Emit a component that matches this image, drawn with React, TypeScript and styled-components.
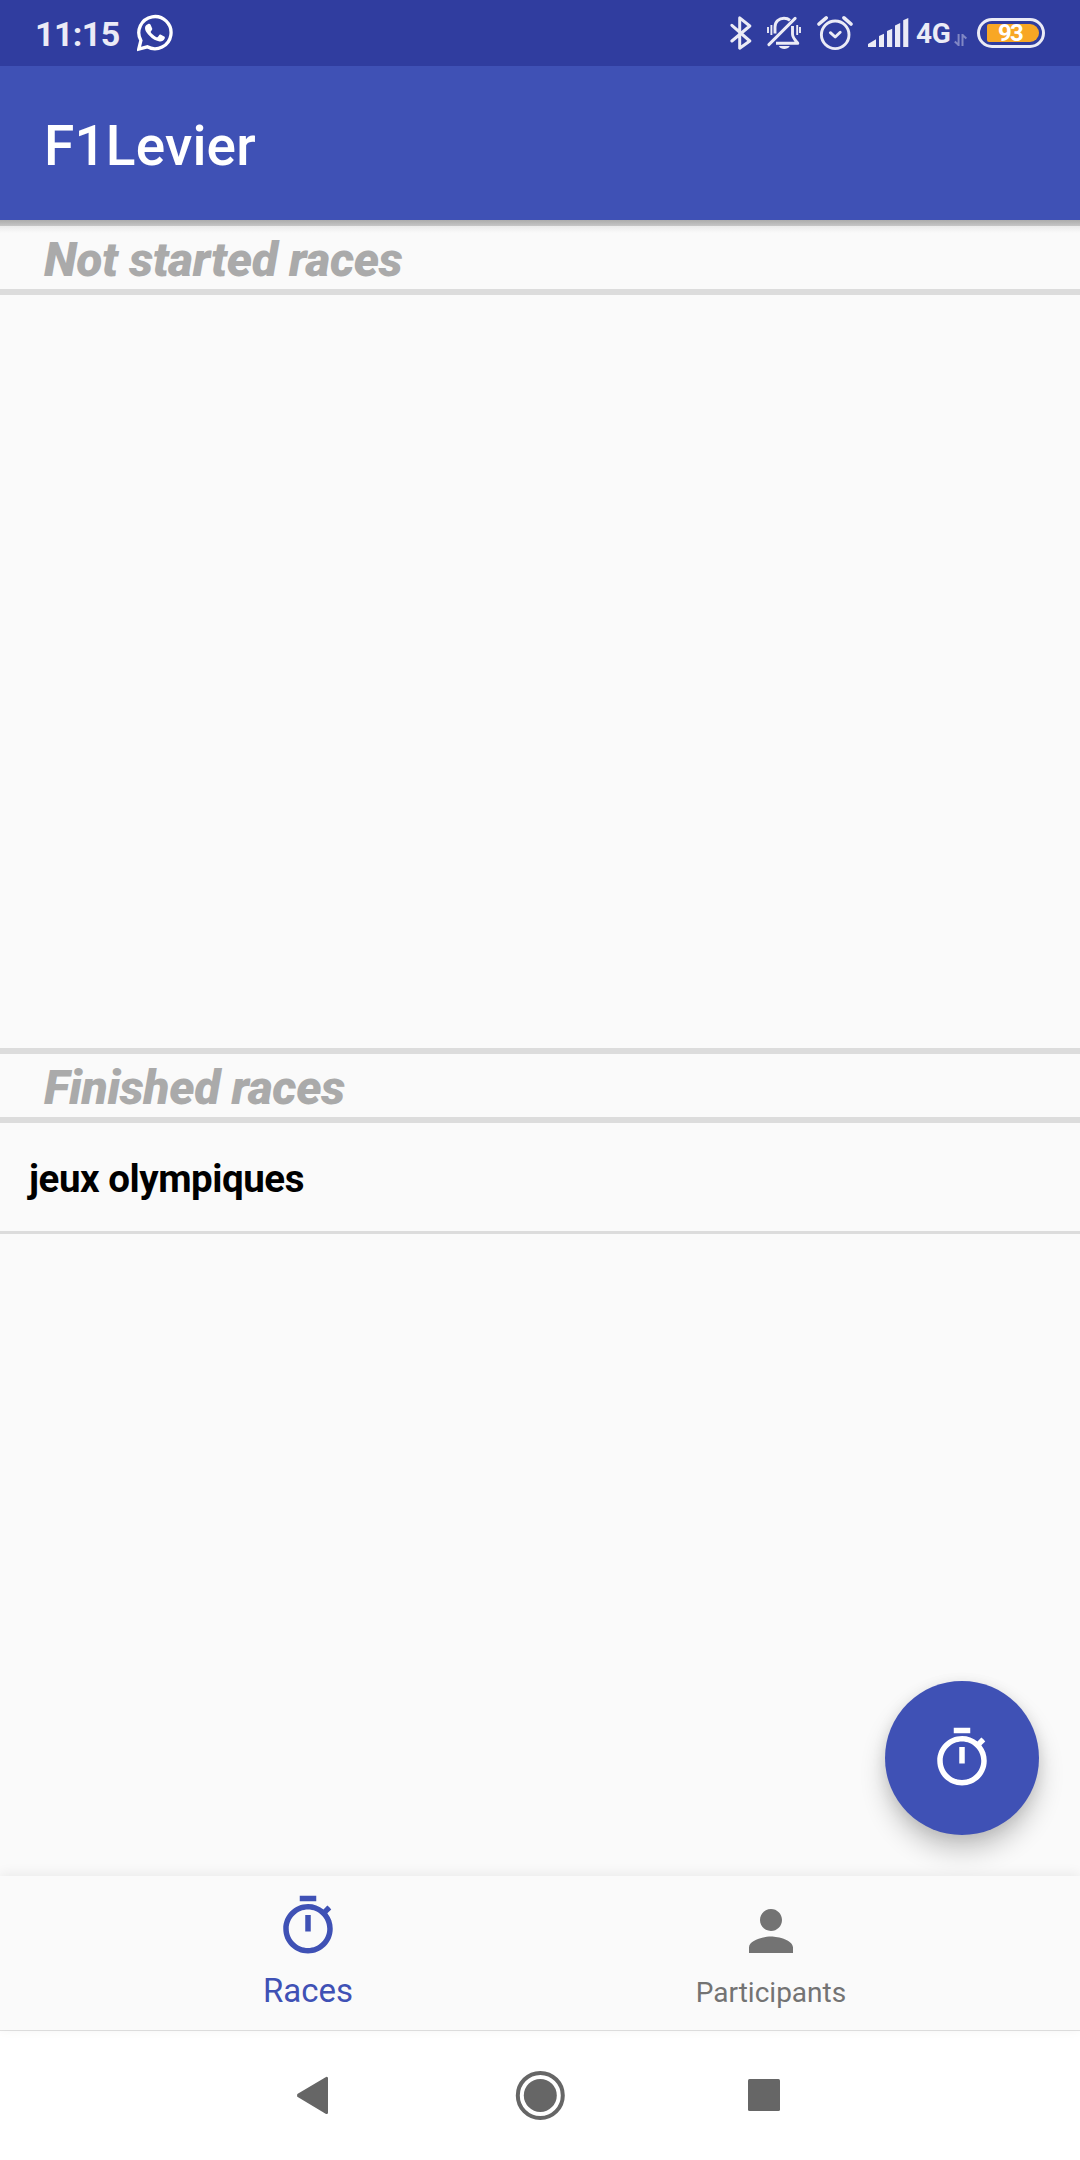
import React from "react";
import styled, { createGlobalStyle } from "styled-components";

const GlobalStyle = createGlobalStyle`
  * { box-sizing: border-box; }
  html, body { margin: 0; padding: 0; }
  body { background: #fafafa; font-family: Roboto, "Noto Sans", sans-serif; }
  svg { display: block; flex: none; }
`;

const Screen = styled.div`
  width: 1080px;
  height: 2160px;
  display: flex;
  flex-direction: column;
  overflow: hidden;
  background: #fafafa;
`;

const StatusBar = styled.header`
  height: 66px;
  flex: none;
  display: flex;
  justify-content: space-between;
  padding: 0 35px 0 35px;
  background: #303d9f;
  color: #ebebf6;
`;

const StatusGroup = styled.div`
  display: flex;
  align-items: center;
`;

const Clock = styled.span`
  width: 102px;
  font-size: 34px;
  font-weight: 700;
  letter-spacing: -0.6px;
  line-height: 40px;
  padding-top: 1px;
`;

const IconSlot = styled.span<{ $gap: number }>`
  display: flex;
  flex: none;
  margin-right: ${(p) => p.$gap}px;
`;

const Network = styled.span`
  width: 38px;
  font-size: 28px;
  font-weight: 700;
  letter-spacing: -0.2px;
  line-height: 32px;
  padding-top: 2px;
`;

const Battery = styled.div`
  width: 68px;
  height: 30px;
  border: 3px solid #ebebf6;
  border-radius: 15px;
  padding: 3px 3px 3px 7px;
`;

const BatteryFill = styled.div`
  width: 52px;
  height: 18px;
  border-radius: 2px 9px 9px 2px;
  background: #f8a724;
  color: #fff;
  font-size: 24px;
  font-weight: 700;
  line-height: 19px;
  text-align: center;
  letter-spacing: -1.8px;
  padding-right: 6px;
`;

const AppBar = styled.div`
  height: 154px;
  flex: none;
  display: flex;
  align-items: center;
  padding: 6px 44px 0;
  background: #3f51b5;
`;

const AppTitle = styled.h1`
  margin: 0;
  color: #fff;
  font-size: 55px;
  font-weight: 500;
  letter-spacing: 0.15px;
  line-height: 64px;
`;

const SectionHeader = styled.h2<{ $raised?: boolean }>`
  flex: none;
  height: 75px;
  margin: 0;
  padding: 2px 0 0 44px;
  border-top: 6px solid ${(p) => (p.$raised ? "transparent" : "#dcdcdc")};
  border-bottom: 6px solid #dcdcdc;
  background: ${(p) =>
    p.$raised
      ? "linear-gradient(to bottom, #acacac 0, #c6c6c6 6px, #ebebeb 6px, #fafafa 13px) border-box"
      : "#fafafa"};
  color: #aaa;
  font-size: 48px;
  font-style: italic;
  font-weight: 900;
  letter-spacing: -0.38px;
  line-height: 63px;
  white-space: nowrap;
`;

const RaceList = styled.ul`
  flex: none;
  height: 753px;
  margin: 0;
  padding: 0;
  list-style: none;
`;

const RaceRow = styled.li`
  height: 111px;
  padding-left: 29px;
  border-bottom: 3px solid #dcdcdc;
  color: #000;
  font-size: 38.5px;
  font-weight: 700;
  letter-spacing: -0.46px;
  line-height: 111px;
`;

const FloatingButton = styled.button`
  position: absolute;
  left: 885px;
  top: 1681px;
  width: 154px;
  height: 154px;
  display: grid;
  place-items: center;
  padding: 0;
  border: 0;
  border-radius: 50%;
  background: #3f51b5;
  color: #fff;
  box-shadow: 0 16px 26px rgba(0, 0, 0, 0.2), 0 3px 14px rgba(0, 0, 0, 0.1);
`;

const BottomNav = styled.nav`
  height: 154px;
  flex: none;
  display: flex;
  padding-left: 77px;
  background: #fafafa;
  box-shadow: 0 -2px 12px rgba(0, 0, 0, 0.07);
  position: relative;
`;

const Tab = styled.a<{ $active?: boolean }>`
  width: ${(p) => (p.$active ? 462 : 464)}px;
  display: flex;
  flex-direction: column;
  align-items: center;
  padding-top: ${(p) => (p.$active ? 17 : 22)}px;
  color: ${(p) => (p.$active ? "#3f51b5" : "#737373")};
  gap: 13px;
`;

const TabLabel = styled.span<{ $active?: boolean }>`
  font-size: ${(p) => (p.$active ? 33 : 28)}px;
  line-height: ${(p) => (p.$active ? 38 : 32)}px;
`;

const SystemNav = styled.footer`
  height: 130px;
  flex: none;
  display: flex;
  align-items: flex-start;
  padding: 38px 0 0 297px;
  border-top: 1px solid #e2e2e2;
  background: #fff;
`;

const TimerIcon = () => (
  <svg width="66" height="66" viewBox="0 0 24 24" fill="currentColor">
    <path d="M15 1H9v2h6V1zm-4 13h2V8h-2v6zm8.03-6.61l1.42-1.42c-.43-.51-.9-.99-1.41-1.41l-1.42 1.42C16.07 4.74 14.12 4 12 4c-4.97 0-9 4.03-9 9s4.02 9 9 9 9-4.03 9-9c0-2.12-.74-4.07-1.97-5.61zM12 20c-3.87 0-7-3.13-7-7s3.13-7 7-7 7 3.13 7 7-3.13 7-7 7z" />
  </svg>
);

const PersonIcon = () => (
  <svg width="66" height="66" viewBox="0 0 24 24" fill="currentColor">
    <path d="M12 12c2.21 0 4-1.79 4-4s-1.79-4-4-4-4 1.79-4 4 1.79 4 4 4zm0 2c-2.67 0-8 1.34-8 4v2h16v-2c0-2.66-5.33-4-8-4z" />
  </svg>
);

const WhatsAppIcon = () => (
  <svg width="36" height="66" viewBox="0 0 36 66">
    <path
      d="M1.8 49 L3.9 40.5 A16.1 16.1 0 1 1 10.3 46.8 Z"
      fill="none"
      stroke="#fff"
      strokeWidth="3.3"
    />
    <path
      d="M10.8 24.2c1-.7 2.300-.6 2.800.5l1.600 3.800c.3.800-.2 1.500-1.400 2.900-.4.500.2 1.300 1.400 2.700 1.300 1.400 2.700 2.500 4.200 3.100.8.300 1.100.100 1.600-.5l1.300-1.600c.5-.6 1-.6 1.700-.3l3.200 1.600c.8.400.8 1 .5 2-.8 2.100-3 3.200-5 3-3.300-.2-7.300-2.200-10.500-5.800-3.400-3.700-4.400-6.100-4.100-8.400.2-1.300 1.200-2.400 2.700-3z"
      fill="#fff"
    />
  </svg>
);

const BluetoothIcon = () => (
  <svg width="23" height="66" viewBox="0 0 23 66" fill="none" stroke="currentColor" strokeWidth="3" strokeLinejoin="round" strokeLinecap="round">
    <path d="M1.900 25.300 L19.800 41 L9.700 48.200 V17.800 L19.800 26 L1.900 41" />
  </svg>
);

const SilentIcon = () => (
  <svg width="34" height="66" viewBox="0 0 34 66" fill="none" stroke="currentColor" strokeWidth="2.900">
    <path d="M1.900 44.600 L28.100 18.400" strokeLinecap="round" strokeWidth="2.900" />
    <path d="M8 33.500 V27 C8 21.500 12 18.300 17 18.300 C19.500 18.300 21.500 19 23 20.300" />
    <path d="M25.500 26 V34 C25.500 37.500 28 40 30.800 43.300 H9" strokeLinejoin="round" />
    <path d="M11.800 46 H22.800 C21.500 48.200 19.500 49 17.300 49 C15 49 13 48.200 11.800 46z" fill="currentColor" stroke="none" />
    <path d="M1 27 V33 M4.400 25 V35 M30.200 25 V35 M33 27 V33" strokeWidth="1.900" />
  </svg>
);

const AlarmIcon = () => (
  <svg width="36" height="66" viewBox="0 0 36 66" fill="none" stroke="currentColor" strokeLinecap="round">
    <circle cx="18.200" cy="34.800" r="13.800" strokeWidth="2.900" />
    <path d="M13.400 32.700 L18.200 37 L23.200 32.300" strokeWidth="2.900" strokeLinejoin="round" />
    <path d="M2 24 L9.200 17.800 M27 17.800 L34 24" strokeWidth="3.600" />
  </svg>
);

const SignalIcon = () => (
  <svg width="41" height="66" viewBox="0 0 41 66" fill="currentColor">
    <path d="M0 44 L8 39.300 V47 H0z M11 36 L16 33.700 V47 H11z M19 31 L24.200 28.700 V47 H19z M27 25.500 L32.200 23 V47 H27z M35.200 20.300 L40.300 18 V47 H35.200z" />
  </svg>
);

const DataArrowsIcon = () => (
  <svg width="13" height="66" viewBox="0 0 13 66" fill="none" stroke="#8087c4" strokeWidth="2">
    <path d="M4.600 34 V46 M4.600 45 L0.800 41.500 M8.500 46 V34 M8.500 35 L12.400 38.500" />
  </svg>
);

const BackIcon = () => (
  <svg width="31" height="55" viewBox="0 0 31 55">
    <path
      d="M1.400 25.900 L29.700 9.200 V43.800 L1.400 26.900z"
      fill="#666"
      stroke="#666"
      strokeWidth="2.600"
      strokeLinejoin="round"
    />
  </svg>
);

const HomeIcon = () => (
  <svg width="51" height="55" viewBox="0 0 51 55">
    <circle cx="25.300" cy="26.400" r="22.500" fill="none" stroke="#666" strokeWidth="4" />
    <circle cx="25.300" cy="26.400" r="16.500" fill="#666" />
  </svg>
);

const RecentsIcon = () => (
  <svg width="32" height="55" viewBox="0 0 32 55">
    <rect y="10" width="32" height="32" rx="1.500" fill="#666" />
  </svg>
);

export default function App() {
  return (
    <Screen>
      <GlobalStyle />
      <StatusBar>
        <StatusGroup>
          <Clock>11:15</Clock>
          <WhatsAppIcon />
        </StatusGroup>
        <StatusGroup>
          <IconSlot $gap={14}><BluetoothIcon /></IconSlot>
          <IconSlot $gap={16}><SilentIcon /></IconSlot>
          <IconSlot $gap={15}><AlarmIcon /></IconSlot>
          <IconSlot $gap={7}><SignalIcon /></IconSlot>
          <Network>4G</Network>
          <IconSlot $gap={10}><DataArrowsIcon /></IconSlot>
          <Battery>
            <BatteryFill>93</BatteryFill>
          </Battery>
        </StatusGroup>
      </StatusBar>
      <AppBar>
        <AppTitle>F1Levier</AppTitle>
      </AppBar>
      <SectionHeader $raised>Not started races</SectionHeader>
      <RaceList />
      <SectionHeader>Finished races</SectionHeader>
      <RaceList>
        <RaceRow>jeux olympiques</RaceRow>
      </RaceList>
      <BottomNav>
        <Tab $active>
          <TimerIcon />
          <TabLabel $active>Races</TabLabel>
        </Tab>
        <Tab>
          <PersonIcon />
          <TabLabel>Participants</TabLabel>
        </Tab>
      </BottomNav>
      <SystemNav>
        <IconSlot $gap={187}><BackIcon /></IconSlot>
        <IconSlot $gap={182}><HomeIcon /></IconSlot>
        <IconSlot $gap={0}><RecentsIcon /></IconSlot>
      </SystemNav>
      <FloatingButton aria-label="New race">
        <TimerIcon />
      </FloatingButton>
    </Screen>
  );
}
